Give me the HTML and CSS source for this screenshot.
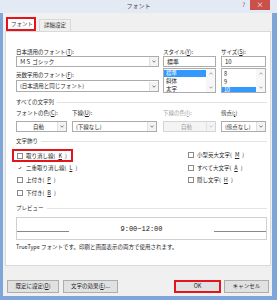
FILE: index.html
```html
<!DOCTYPE html>
<html lang="ja">
<head>
<meta charset="utf-8">
<link rel="stylesheet" href="styles.css">
</head>
<body>
<div class="window">
  <div class="titlebar">
    <span></span>
    <span class="title">フォント</span>
    <div class="controls"><span class="help">?</span><span class="close">×</span></div>
  </div>
  <div class="dialog">
    <div class="tabs">
      <div class="tab active">フォント</div>
      <div class="tab">詳細設定</div>
    </div>
    <div class="panel">
      <div class="topgrid">
        <div class="col">
          <div class="label">日本語用のフォント(<u>T</u>):</div>
          <div class="combo"><span class="val">ＭＳ ゴシック</span><span class="arrow"><svg width="4" height="3" viewBox="0 0 4 3"><polyline points="0.5,0.8 2,2.2 3.5,0.8" fill="none" stroke="#555" stroke-width="0.8"/></svg></span></div>
          <div class="label label2">英数字用のフォント(<u>F</u>):</div>
          <div class="combo combo2"><span class="val">(日本語用と同じフォント)</span><span class="arrow"><svg width="4" height="3" viewBox="0 0 4 3"><polyline points="0.5,0.8 2,2.2 3.5,0.8" fill="none" stroke="#555" stroke-width="0.8"/></svg></span></div>
        </div>
        <div class="col colstyle">
          <div class="label">スタイル(<u>Y</u>):</div>
          <div class="textbox">標準</div>
          <div class="listbox">
            <div class="items"><div class="item sel">標準</div><div class="item">斜体</div><div class="item">太字</div></div>
            <div class="scroll">
              <svg width="4" height="3" viewBox="0 0 4 3"><polyline points="0.5,2.2 2,0.8 3.5,2.2" fill="none" stroke="#888" stroke-width="0.8"/></svg>
              <svg width="4" height="3" viewBox="0 0 4 3"><polyline points="0.5,0.8 2,2.2 3.5,0.8" fill="none" stroke="#888" stroke-width="0.8"/></svg>
            </div>
          </div>
        </div>
        <div class="col colsize">
          <div class="label">サイズ(<u>S</u>):</div>
          <div class="textbox">10</div>
          <div class="listbox">
            <div class="items"><div class="item">8</div><div class="item">9</div><div class="item sel">10</div></div>
            <div class="scroll">
              <svg width="4" height="3" viewBox="0 0 4 3"><polyline points="0.5,2.2 2,0.8 3.5,2.2" fill="none" stroke="#888" stroke-width="0.8"/></svg>
              <svg width="4" height="3" viewBox="0 0 4 3"><polyline points="0.5,0.8 2,2.2 3.5,0.8" fill="none" stroke="#888" stroke-width="0.8"/></svg>
            </div>
          </div>
        </div>
      </div>

      <div class="group">すべての文字列</div>
      <div class="row2">
        <div class="label">フォントの色(<u>C</u>):</div>
        <div class="label">下線(<u>U</u>):</div>
        <div class="label dim">下線の色(<u>I</u>):</div>
        <div class="label">傍点(<u>;</u>)</div>
        <div class="combo center"><span class="val">自動</span><span class="arrow"><svg width="4" height="3" viewBox="0 0 4 3"><polyline points="0.5,0.8 2,2.2 3.5,0.8" fill="none" stroke="#555" stroke-width="0.8"/></svg></span></div>
        <div class="combo"><span class="val">(下線なし)</span><span class="arrow"><svg width="4" height="3" viewBox="0 0 4 3"><polyline points="0.5,0.8 2,2.2 3.5,0.8" fill="none" stroke="#555" stroke-width="0.8"/></svg></span></div>
        <div class="combo center disabled"><span class="val">自動</span><span class="arrow"><svg width="4" height="3" viewBox="0 0 4 3"><polyline points="0.5,0.8 2,2.2 3.5,0.8" fill="none" stroke="#bbb" stroke-width="0.8"/></svg></span></div>
        <div class="combo"><span class="val">(傍点なし)</span><span class="arrow"><svg width="4" height="3" viewBox="0 0 4 3"><polyline points="0.5,0.8 2,2.2 3.5,0.8" fill="none" stroke="#555" stroke-width="0.8"/></svg></span></div>
      </div>

      <div class="group">文字飾り</div>
      <div class="checks">
        <div class="check hl"><span class="box"></span>取り消し線(<u>K</u>)</div>
        <div class="check"><span class="box"></span>小型英大文字(<u>M</u>)</div>
        <div class="check"><span class="box on"><svg width="6" height="6" viewBox="0 0 6 6"><polyline points="1,3 2.4,4.5 5,1.3" fill="none" stroke="#222" stroke-width="1"/></svg></span>二重取り消し線(<u>L</u>)</div>
        <div class="check"><span class="box"></span>すべて大文字(<u>A</u>)</div>
        <div class="check"><span class="box"></span>上付き(<u>P</u>)</div>
        <div class="check"><span class="box"></span>隠し文字(<u>H</u>)</div>
        <div class="check"><span class="box"></span>下付き(<u>B</u>)</div>
      </div>

      <div class="group">プレビュー</div>
      <div class="preview">
        <span class="pline"></span>
        <span class="ptext">9:00~12:00</span>
        <span class="pline"></span>
      </div>
      <div class="note">TrueType フォントです。印刷と画面表示の両方で使用されます。</div>
    </div>
    <div class="buttons">
      <div class="btn b1">既定に設定(<u>D</u>)</div>
      <div class="btn b2">文字の効果(<u>E</u>)...</div>
      <div class="btn ok">OK</div>
      <div class="btn cancel">キャンセル</div>
    </div>
  </div>
</div>
</body>
</html>
```

FILE: styles.css
```css
* { box-sizing: border-box; }
html, body { margin: 0; padding: 0; }
body {
  width: 277px;
  height: 300px;
  overflow: hidden;
  background: #7ea6d8;
  font-family: "Noto Sans CJK JP", "Noto Sans", sans-serif;
  font-size: 5.5px;
  color: #222;
}
u { text-decoration: underline; }
.window { height: 300px; display: flex; flex-direction: column; }

.titlebar {
  height: 13px;
  display: grid;
  grid-template-columns: 1fr auto 1fr;
  align-items: start;
  background: #e3eaf3;
}
.title { font-size: 6px; line-height: 12px; color: #444; }
.controls { justify-self: end; display: flex; align-items: flex-start; }
.help { font-size: 6px; line-height: 9px; color: #555; margin-right: 5px; }
.close {
  width: 20px; height: 10px; margin-right: 7px;
  background: #c9504b; color: #fff;
  font-size: 7px; line-height: 9px; text-align: center;
}

.dialog {
  flex: 1;
  margin: 0 5px 4px 3px;
  background: #f0f0f0;
  padding: 4px 1px 0 2px;
  display: flex;
  flex-direction: column;
}
.tabs { display: flex; align-items: flex-end; padding-left: 1px; height: 14px; }
.tab {
  height: 12px;
  padding: 0 4px;
  border: 1px solid #d9d9d9;
  border-bottom: none;
  background: #f0f0f0;
  line-height: 11px;
  color: #333;
  margin-left: 3px;
}
.tab.active {
  height: 14px;
  margin-left: 0;
  width: 30px;
  border: 2px solid #e3141c;
  background: #fff;
  line-height: 10px;
  padding: 0 0 0 3px;
  position: relative;
  z-index: 1;
}
.panel {
  height: 235px;
  background: #fff;
  border: 1px solid #d9d9d9;
  margin-right: 0;
  padding: 16px 3px 0 10px;
}
.label { height: 8px; line-height: 8px; white-space: nowrap; }
.label.dim { color: #9a9a9a; }
.topgrid { display: grid; grid-template-columns: 147px 58px 45px; }
.col .combo { width: 143px; }
.label2 { margin-top: 4px; }
.combo2 { margin-top: 1px; height: 12px !important; }

.combo {
  height: 11px;
  border: 1px solid #acacac;
  background: #fff;
  display: flex;
  align-items: center;
  padding-left: 3px;
  white-space: nowrap;
}
.combo .val { flex: 1; overflow: hidden; }
.combo.center .val { text-align: center; }
.combo .arrow {
  width: 9px; height: 9px;
  margin-right: 0;
  display: flex; align-items: center; justify-content: center;
  background: #f3f3f3;
  border-left: 1px solid #e0e0e0;
}
.combo.disabled { background: #f4f4f4; border-color: #d5d5d5; color: #9a9a9a; }

.colstyle { width: 53px; }
.textbox {
  height: 11px;
  border: 1px solid #acacac;
  padding-left: 3px;
  line-height: 9px;
  font-size: 6px;
}
.listbox {
  margin-top: 1px;
  height: 25px;
  border: 1px solid #acacac;
  display: flex;
  overflow: hidden;
}
.items { flex: 1; padding-top: 1px; }
.item { height: 8px; line-height: 8px; padding-left: 2px; }
.item.sel { background: #3399ff; color: #fff; height: 7px; line-height: 7px; }
.colsize .item.sel { margin-top: 1px; }
.scroll {
  width: 9px;
  background: #f7f7f7;
  display: flex; flex-direction: column; justify-content: space-between; align-items: center;
  padding: 3px 0;
}

.group {
  margin-top: 5px;
  height: 8px; line-height: 8px;
  display: flex; align-items: center; gap: 3px;
  color: #333;
}
.group::after { content: ""; flex: 1; border-top: 1px solid #e3e3e3; }

.row2 { display: grid; grid-template-columns: 56px 91px 58px 45px; grid-template-rows: 8px 11px; row-gap: 4px; margin-top: 3px; }
.row2 .combo:nth-of-type(5) { width: 51px; }
.row2 .combo:nth-of-type(6) { width: 85px; }
.row2 .combo:nth-of-type(7) { width: 53px; }

.checks { display: grid; grid-template-columns: 171px 1fr; grid-auto-rows: 12.5px; margin-top: 4px; }
.check { display: flex; align-items: center; gap: 3px; padding-left: 1px; white-space: nowrap; }
.check .box {
  width: 6px; height: 6px;
  border: 1px solid #8a8a8a;
  background: #fff;
  display: flex; align-items: center; justify-content: center;
}
.check .box.on { border-color: #fff; background: transparent; }
.check.hl {
  justify-self: start;
  height: 13px;
  margin-left: -4px;
  padding: 0 4px 0 3px;
  border: 2px solid #e3141c;
}

.preview {
  margin-top: 5px;
  height: 23px;
  border: 1px solid #d0d0d0;
  display: flex;
  justify-content: space-between;
  align-items: center;
}
.pline { width: 52px; border-top: 1px solid #888; align-self: flex-end; margin-bottom: 7px; }
.ptext { font-family: "Liberation Mono", monospace; font-size: 7px; color: #111; }
.note { margin-top: 3px; height: 8px; line-height: 8px; white-space: nowrap; }

.buttons { display: flex; margin-top: 14px; padding-left: 2px; }
.btn {
  height: 13px;
  border: 1px solid #adadad;
  background: #e1e1e1;
  text-align: center;
  line-height: 11px;
  white-space: nowrap;
}
.b1 { width: 52px; }
.b2 { width: 55px; margin-left: 4px; }
.ok { width: 47px; margin-left: 56px; border: 2px solid #e3141c; line-height: 9px; }
.cancel { width: 45px; margin-left: 3px; }
```
